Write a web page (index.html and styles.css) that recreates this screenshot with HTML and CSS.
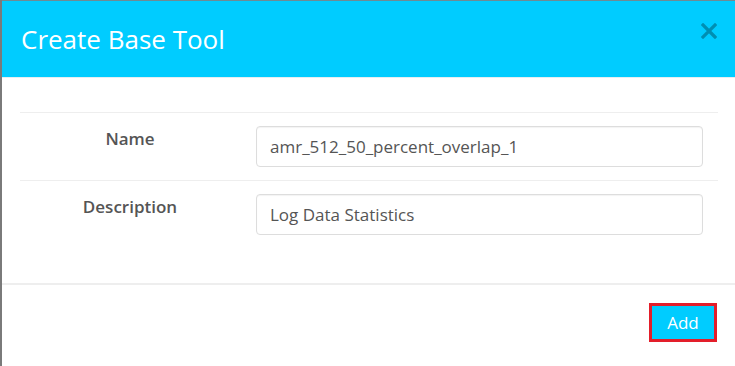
FILE: index.html
```html
<!DOCTYPE html>
<html lang="en">
  <head>
    <meta charset="UTF-8" />
    <meta name="viewport" content="width=device-width, initial-scale=1.0" />
    <title>Create Base Tool</title>
    <link rel="stylesheet" href="styles.css">
  </head>

  <body>
    <div class="modal">
      <div class="modal-header">
        <h1 class="modal-title">Create Base Tool</h1>
        <button class="close" aria-label="Close">
          <svg width="16" height="16" viewBox="0 0 16 16">
            <path d="M2 2 L14 14 M14 2 L2 14" stroke="currentColor" stroke-width="3.2" stroke-linecap="square" />
          </svg>
        </button>
      </div>

      <div class="modal-body">
        <div class="form-row">
          <label class="form-label" for="toolName">Name</label>
          <input class="form-input" type="text" id="toolName" value="amr_512_50_percent_overlap_1" />
        </div>
        <div class="form-row">
          <label class="form-label" for="toolDesc">Description</label>
          <input class="form-input" type="text" id="toolDesc" value="Log Data Statistics" />
        </div>
      </div>

      <div class="modal-footer">
        <button class="btn-add">Add</button>
      </div>
    </div>
  </body>
</html>
```

FILE: styles.css
```css
body {
  margin: 0;
  background: white;
  font-family: "Open Sans", "Liberation Sans", sans-serif;
}

.modal {
  height: 366px;
  box-sizing: border-box;
  border-left: 2px solid #7a7a7a;
  background: white;
}

.modal-header {
  display: flex;
  align-items: center;
  justify-content: space-between;
  height: 78px;
  box-sizing: border-box;
  padding: 0 18px 0 19px;
  background: #00ccff;
  border-top: 1px solid #6e8a93;
  border-bottom: 1px solid #e5eef2;
}

.modal-title {
  margin: 0;
  font-size: 26px;
  font-weight: 400;
  color: white;
}

.close {
  border: none;
  background: none;
  padding: 0;
  margin-top: -16px;
  color: rgba(0, 0, 0, 0.3);
  line-height: 0;
}

.modal-body {
  padding: 34px 17px 35px 18px;
}

.form-row {
  display: grid;
  grid-template-columns: 220px 1fr;
  column-gap: 16px;
  padding: 13px 15px 13px 0;
  border-top: 1px solid #eeeeee;
}

.form-label {
  padding-top: 1px;
  font-size: 17px;
  line-height: 24px;
  font-weight: 600;
  color: #555555;
  text-align: center;
}

.form-input {
  height: 41px;
  box-sizing: border-box;
  padding: 0 13px;
  border: 1px solid #dddddd;
  border-radius: 4px;
  box-shadow: inset 0 1px 1px rgba(0, 0, 0, 0.05);
  font-family: inherit;
  font-size: 17px;
  color: #555555;
}

.modal-footer {
  display: flex;
  justify-content: flex-end;
  padding: 18px 18px 0 0;
  border-top: 2px solid #eeeeee;
}

.btn-add {
  width: 68px;
  height: 39px;
  border: 3px solid #e31e2a;
  background: #00ccff;
  color: white;
  font-family: inherit;
  font-size: 17px;
}
```
